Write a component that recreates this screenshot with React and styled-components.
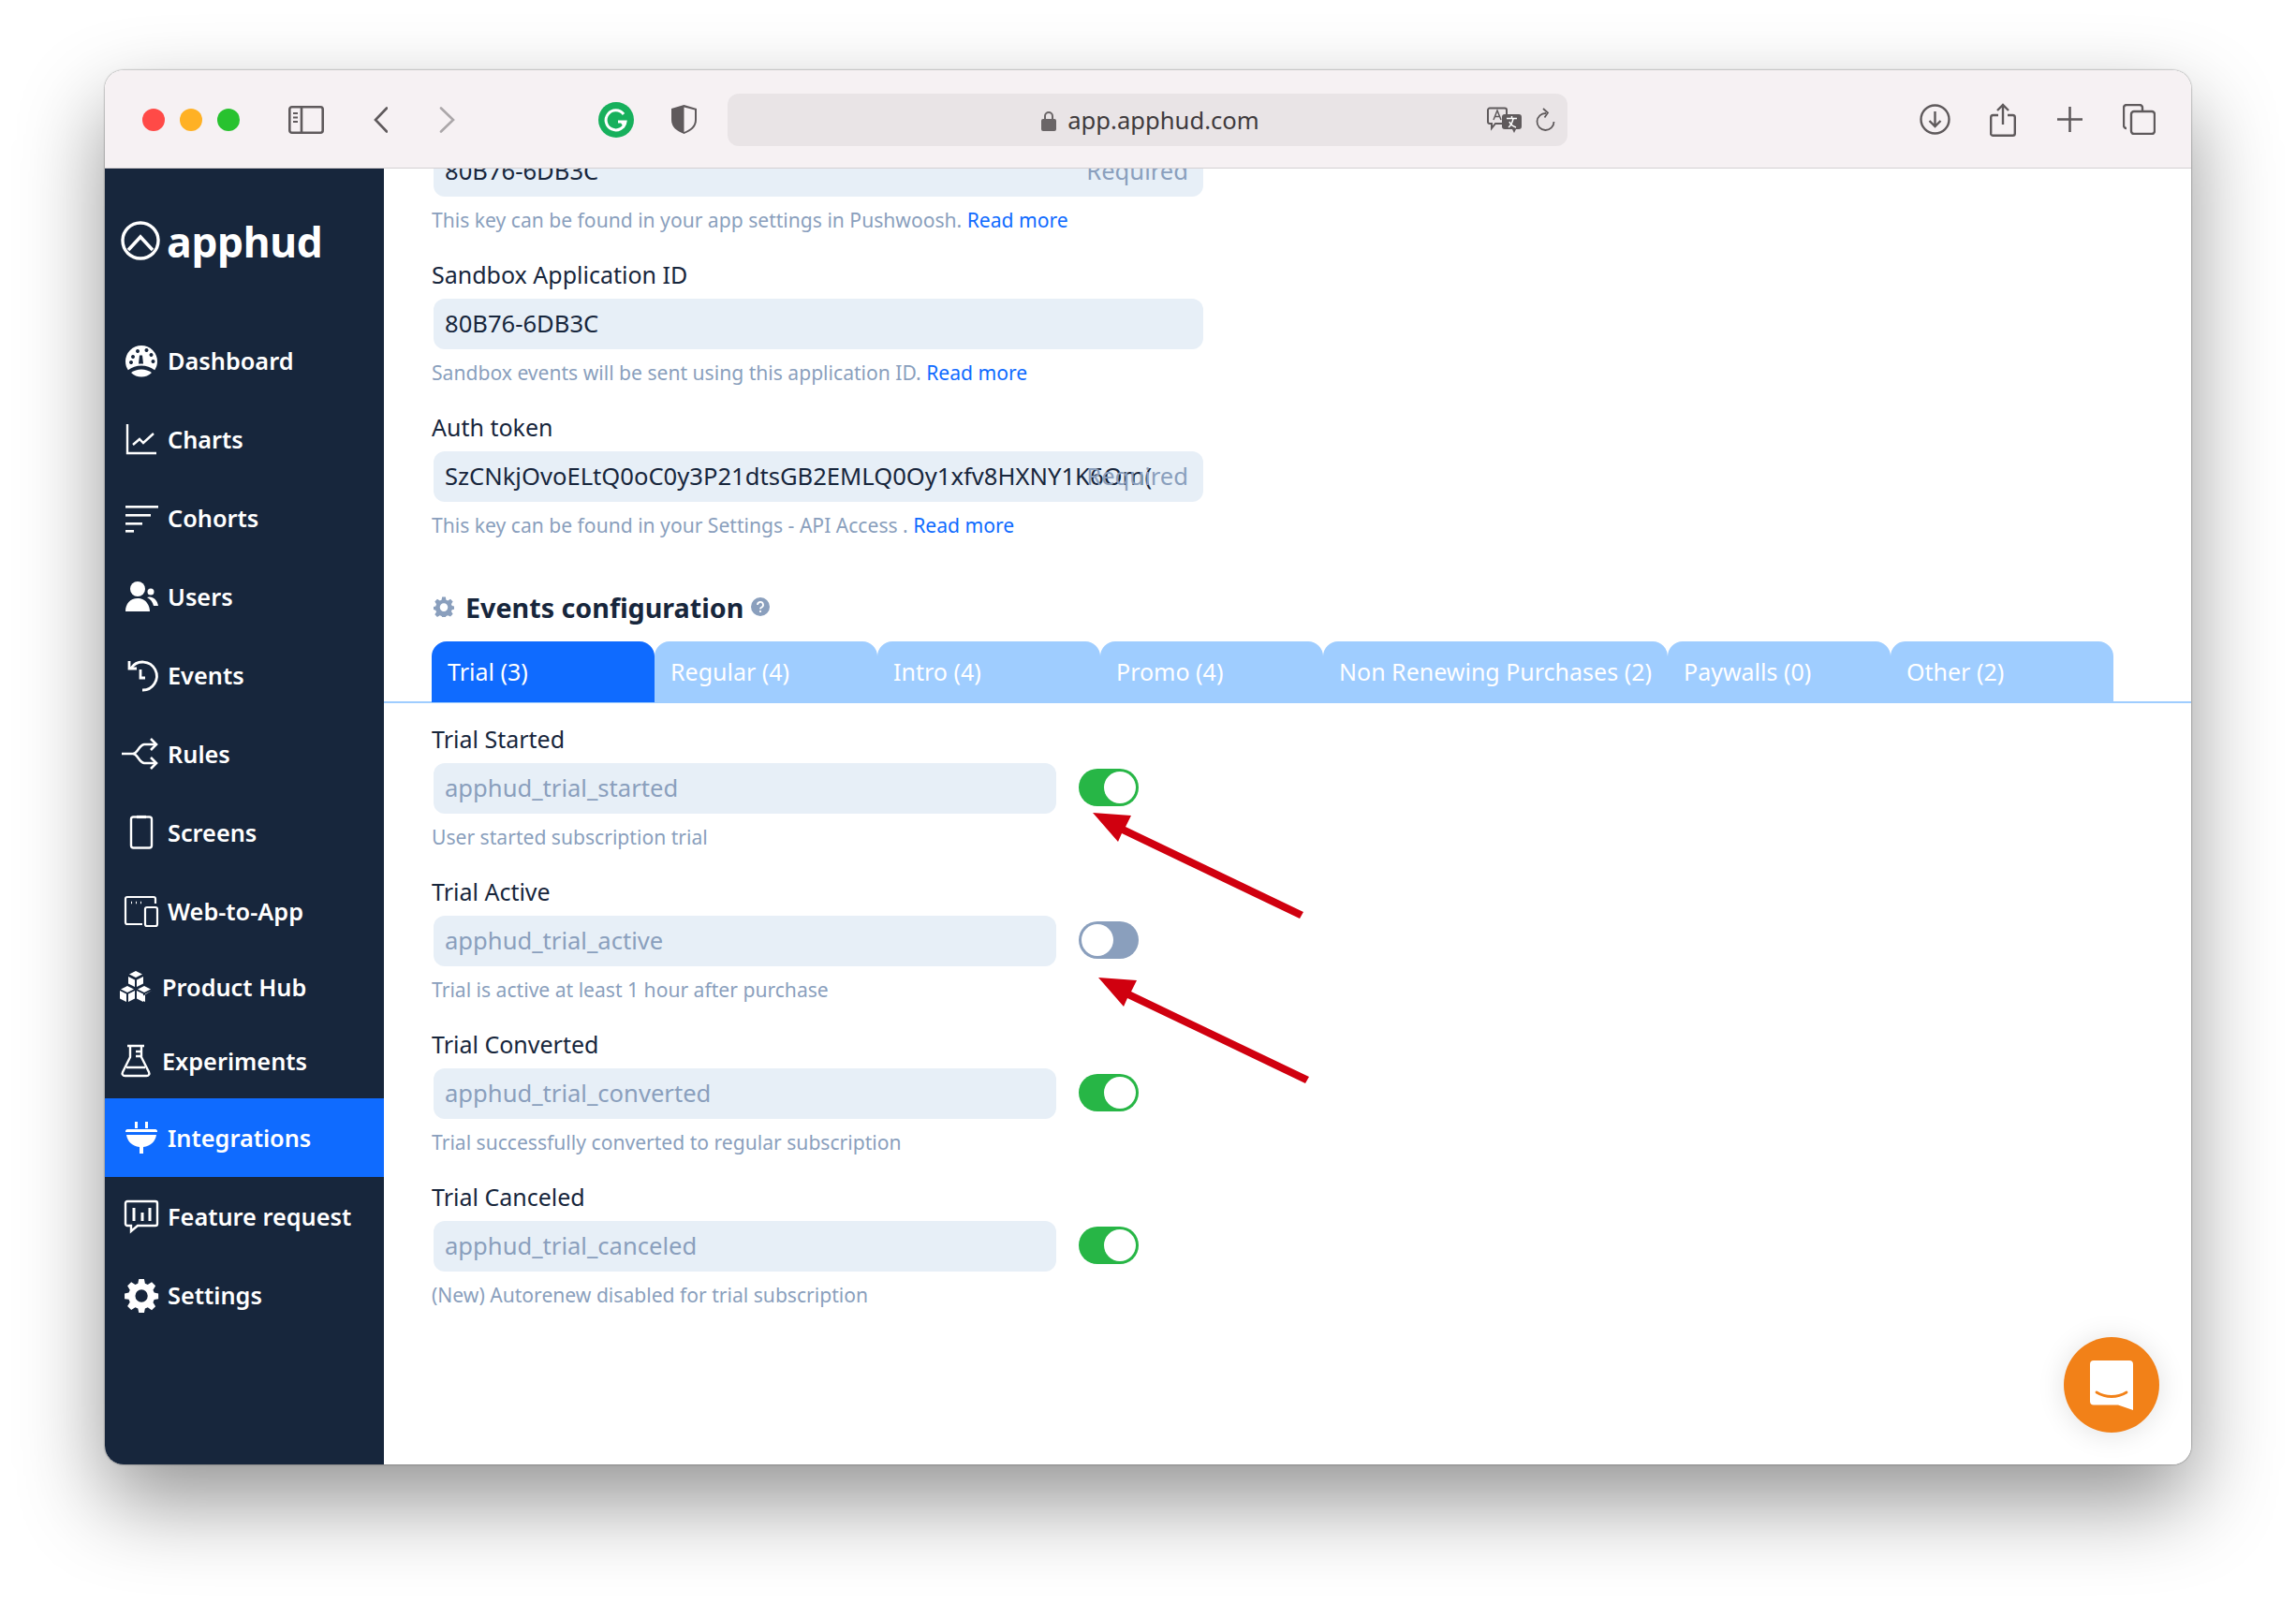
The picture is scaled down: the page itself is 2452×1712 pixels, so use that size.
import { createGlobalStyle, styled } from "styled-components"

const GlobalStyle = createGlobalStyle`
    html, body {
        margin: 0;
        padding: 0;
        background: #fff;
    }
    * {
        box-sizing: border-box;
    }
`

const TEXT_FONT = `"Noto Sans", "Open Sans", sans-serif`

const Page = styled.div`
    width: 2452px;
    height: 1712px;
    padding: 75px 112px 148px;
    font-family: ${TEXT_FONT};
    overflow: hidden;
`

const BrowserShadow = styled.div`
    height: 100%;
    border-radius: 20px;
    box-shadow: 0 40px 90px rgba(0, 0, 0, 0.42), 0 0 2px rgba(0, 0, 0, 0.6);
`

const Browser = styled.div`
    position: relative;
    height: 100%;
    display: flex;
    flex-direction: column;
    border-radius: 20px;
    overflow: hidden;
    background: #fff;
`

const Toolbar = styled.header`
    flex: 0 0 105px;
    display: flex;
    align-items: center;
    padding: 1px 38px 0 40px;
    background: #f6f1f3;
    border-bottom: 1px solid #d4d0d2;
    color: #5f5a5c;
    z-index: 2;
`

const Lights = styled.div`
    display: flex;
    gap: 16px;
    margin-right: 52px;
`

const Light = styled.span`
    width: 24px;
    height: 24px;
    border-radius: 50%;
    background: ${(p) => p.$color};
`

const ToolIcon = styled.svg`
    display: block;
    flex: none;
    margin-right: ${(p) => p.$gap || 0}px;
`

const AddressBar = styled.div`
    position: relative;
    width: 897px;
    height: 56px;
    display: flex;
    align-items: center;
    justify-content: center;
    gap: 12px;
    margin-right: auto;
    padding: 2px 0 0 6px;
    border-radius: 12px;
    background: #e9e4e6;
    color: #3f3b3d;
    font-size: 25.6px;
`

const AddressActions = styled.div`
    position: absolute;
    top: 0;
    right: 13px;
    height: 100%;
    display: flex;
    align-items: center;
    gap: 15px;
`

const Body = styled.div`
    flex: 1;
    min-height: 0;
    display: flex;
`

const Sidebar = styled.aside`
    flex: 0 0 298px;
    background: #17263c;
    color: #fff;
    overflow: hidden;
`

const Logo = styled.div`
    display: flex;
    align-items: center;
    gap: 7px;
    height: 100px;
    margin-top: 27px;
    padding-left: 17px;
    font-family: "Open Sans", sans-serif;
    font-size: 44.5px;
    font-weight: 700;
    letter-spacing: -0.6px;
`

const Nav = styled.nav`
    display: flex;
    flex-direction: column;
    margin-top: 35.5px;
`

const NavItem = styled.div`
    height: ${(p) => (p.$compact ? 79 : 84)}px;
    display: flex;
    align-items: center;
    padding-left: ${(p) => (p.$compact ? 15 : 21)}px;
    gap: 10px;
    background: ${(p) => (p.$active ? "#0f6bff" : "transparent")};
    font-size: 25.3px;
    font-weight: 600;
`

const NavIcon = styled.svg`
    flex: none;
    display: block;
`

const Main = styled.main`
    position: relative;
    flex: 1;
    min-width: 0;
    overflow: hidden;
    color: #17263c;
`

const Scroller = styled.div`
    margin-top: -56px;
`

const Section = styled.div`
    padding: 32px 0 0 51px;
`

const Label = styled.div`
    height: 55px;
    padding-top: 6px;
    line-height: 46px;
    font-size: 25px;
`

const InputRow = styled.div`
    display: flex;
    align-items: center;
    gap: 24px;
`

const InputBox = styled.div`
    position: relative;
    flex: none;
    width: ${(p) => p.$width}px;
    height: 54px;
    line-height: 54px;
    margin-left: 2px;
    padding: 0 12px;
    border-radius: 12px;
    background: #e7eff7;
    color: ${(p) => (p.$muted ? "#8a9fbd" : "#17263c")};
    font-size: 25.6px;
    white-space: nowrap;
    overflow: hidden;
`

const Required = styled.span`
    position: absolute;
    top: 0;
    right: 16px;
    color: #8a9fbd;
`

const Hint = styled.div`
    height: 54px;
    padding-top: 10px;
    line-height: 30px;
    color: #8a9fbd;
    font-size: 21.1px;
`

const Link = styled.a`
    color: #0f6bff;
`

const ConfigTitle = styled.h2`
    display: flex;
    align-items: center;
    height: 44px;
    margin: 36px 0 15px 2px;
    gap: 8px;
    font-size: 28.7px;
    font-weight: 700;
`

const GearIcon = styled.svg`
    margin-right: 4px;
`

const Tabs = styled.div`
    display: flex;
    padding-left: 51px;
    border-bottom: 2px solid #9fcdff;
`

const Tab = styled.div`
    width: ${(p) => p.$width}px;
    height: 65px;
    margin-bottom: -1px;
    padding: 17px 17px 0;
    border-radius: 16px 16px 0 0;
    background: ${(p) => (p.$active ? "#0f6bff" : "#9fcdff")};
    color: #fff;
    font-size: 25px;
    line-height: 30px;
    white-space: nowrap;
`

const Events = styled.div`
    margin-top: 9px;
    padding-left: 51px;
`

const Switch = styled.span`
    flex: none;
    display: flex;
    justify-content: ${(p) => (p.$on ? "flex-end" : "flex-start")};
    align-items: center;
    width: 64px;
    height: 40px;
    margin-top: -2px;
    padding: 0 3px;
    border-radius: 20px;
    background: ${(p) => (p.$on ? "#27b646" : "#8a9fbd")};
    &::after {
        content: "";
        width: 34px;
        height: 34px;
        border-radius: 50%;
        background: #fff;
    }
`

const Arrow = styled.svg`
    position: absolute;
    left: ${(p) => p.$x}px;
    top: ${(p) => p.$y}px;
    pointer-events: none;
`

const ChatButton = styled.div`
    position: absolute;
    right: 34px;
    bottom: 34px;
    width: 102px;
    height: 102px;
    display: flex;
    align-items: center;
    justify-content: center;
    border-radius: 50%;
    background: #f28118;
    box-shadow: 0 2px 30px rgba(0, 0, 0, 0.12);
`

const navItems = [
    { label: "Dashboard", icon: <g fill="currentColor"><path fillRule="evenodd" d="M18 2a17 17 0 0 0-17 17c0 3.500 1 6.500 2.800 9.200C8 25.200 12.600 23.500 18 23.500s10 1.700 14.200 4.700C34 25.500 35 22.500 35 19A17 17 0 0 0 18 2ZM12 8a2 2 0 1 1 0 .01ZM21.500 7a2 2 0 1 1 0 .01ZM7 14a2 2 0 1 1 0 .01ZM26.500 12a2 2 0 1 1 0 .01ZM16 12.500l3 0 1 9h-5ZM5 20a2 2 0 1 1 0 .01ZM28.500 19a2 2 0 1 1 0 .01Z"/><path d="M7 31c3-2 7-3.500 11-3.500S26 29 29 31c-3 3-7 4.500-11 4.500S10 34 7 31Z"/></g> },
    { label: "Charts", icon: <g fill="none" stroke="currentColor" strokeWidth="2.400"><path d="M3 2v31h31"/><path d="M9 24l7-6 4 4 11-10"/></g> },
    { label: "Cohorts", icon: <g fill="currentColor"><rect x="1" y="5" width="35" height="2.600"/><rect x="1" y="14" width="27" height="2.600"/><rect x="1" y="23" width="18" height="2.600"/><rect x="1" y="31" width="9" height="2.600"/></g> },
    { label: "Users", icon: <g fill="currentColor"><circle cx="14" cy="10" r="8"/><path d="M1 34c0-8 5-14 13-14 4 0 8 1.500 10 5 2 2.500 3 6 3 9Z"/><circle cx="28" cy="13" r="3.500"/><path d="M24 19c5-2 11 2 12 9h-5c-1-4-3-7-7-9Z"/></g> },
    { label: "Events", icon: <g fill="none" stroke="currentColor" strokeWidth="2.800"><path d="M7 10.500A15 15 0 1 1 19 34"/><path d="M5 3v8h8"/><path d="M17 12v9h5"/></g> },
    { label: "Rules", icon: <g fill="none" stroke="currentColor" strokeWidth="2.600"><path d="M-3 18h12c5 0 6-9 12-10h12"/><path d="M9 18c5 0 6 9 12 10h12"/><path d="M28 2l6 6-6 6M28 22l6 6-6 6"/></g> },
    { label: "Screens", icon: <g fill="none" stroke="currentColor" strokeWidth="2.400"><rect x="7" y="1.500" width="22" height="33" rx="2.500"/><path d="M13 1.500h10" strokeWidth="3.200"/></g> },
    { label: "Web-to-App", icon: <g fill="none" stroke="currentColor" strokeWidth="2.200"><path d="M19 32H3a2 2 0 0 1-2-2V5a2 2 0 0 1 2-2h28a2 2 0 0 1 2 2v5"/><rect x="22" y="14" width="13" height="20" rx="2"/><path d="M7 9h1M12 9h1M17 9h1" strokeWidth="2.400"/></g> },
    { label: "Product Hub", compact: true, icon: <g fill="currentColor"><path d="M18 1l7 3.500-7 3.500-7-3.500Z"/><path d="M10 7l7 3.500v7.500l-7-3.500ZM26 7l-7 3.500v7.500l7-3.500Z"/><path d="M9 17l7 3.500-7 3.500-7-3.500ZM27 17l7 3.500-7 3.500-7-3.500Z"/><path d="M1 22l7 3.500V34l-7-3.500ZM17 22l-7 3.500V34l7-3.500ZM19 22l7 3.500V34l-7-3.500ZM35 22l-7 3.500V34l-7-3.500Z"/></g> },
    { label: "Experiments", compact: true, icon: <g fill="none" stroke="currentColor" strokeWidth="2.400"><path d="M9 2h18M12 2v12L4 30c-1 2 0 4 2.500 4h23c2.500 0 3.500-2 2.500-4L24 14V2"/><path d="M8 25h20M18 8h6M18 13h6"/></g> },
    { label: "Integrations", active: true, icon: <g fill="currentColor"><path d="M11 1h3v7h-3ZM22 1h3v7h-3Z"/><path d="M3 9h30c1 0 2 1 2 2v1H1v-1c0-1 1-2 2-2Z"/><path d="M2 15h32c-1 7-6 12-14 13v7h-4v-7C8 27 3 22 2 15Z"/></g> },
    { label: "Feature request", icon: <g fill="none" stroke="currentColor" strokeWidth="2.400"><path d="M3 2h30a2 2 0 0 1 2 2v22a2 2 0 0 1-2 2H14l-7 6v-6H3a2 2 0 0 1-2-2V4a2 2 0 0 1 2-2Z"/><path d="M10 9v14M19 14v9M27 9v14" strokeWidth="3"/></g> },
    { label: "Settings", icon: <path fill="currentColor" fillRule="evenodd" d="M15 1h6l1 5 3 1.300 4.500-2.800 4.300 4.300L31 13.300l1.300 3 4.700 1v6l-4.700 1-1.300 3 2.800 4.500-4.300 4.300L25 33l-3 1.300-1 4.700h-6l-1-4.700L11 33l-4.500 2.800-4.300-4.300L5 27l-1.300-3L-1 23.300v-6l4.700-1L5 13.300 2.200 8.800l4.300-4.300L11 7.300l3-1.300ZM18 13a7 7 0 1 0 0 14 7 7 0 0 0 0-14Z" transform="translate(1 0) scale(.95)"/> },
]

const topFields = [
    { label: "Sandbox Application ID", value: "80B76-6DB3C", hint: "Sandbox events will be sent using this application ID." },
    { label: "Auth token", value: "SzCNkjOvoELtQ0oC0y3P21dtsGB2EMLQ0Oy1xfv8HXNY1K6Om(", hint: "This key can be found in your Settings - API Access .", required: true },
]

const tabs = [
    { label: "Trial (3)", width: 238, active: true },
    { label: "Regular (4)", width: 238 },
    { label: "Intro (4)", width: 238 },
    { label: "Promo (4)", width: 238 },
    { label: "Non Renewing Purchases (2)", width: 368 },
    { label: "Paywalls (0)", width: 238 },
    { label: "Other (2)", width: 238 },
]

const events = [
    { label: "Trial Started", value: "apphud_trial_started", hint: "User started subscription trial", on: true },
    { label: "Trial Active", value: "apphud_trial_active", hint: "Trial is active at least 1 hour after purchase", on: false },
    { label: "Trial Converted", value: "apphud_trial_converted", hint: "Trial successfully converted to regular subscription", on: true },
    { label: "Trial Canceled", value: "apphud_trial_canceled", hint: "(New) Autorenew disabled for trial subscription", on: true },
]

const RedArrow = ({ x, y }) => (
    <Arrow $x={x} $y={y} width="240" height="125" viewBox="0 0 240 125">
        <path fill="#d0000f" d="M5 5L46 8 40 20 230 111 226 118 36 27 32 36Z" />
    </Arrow>
)

const App = () => {
    return (
        <Page>
            <GlobalStyle />
            <BrowserShadow>
                <Browser>
                    <Toolbar>
                        <Lights>
                            <Light $color="#ff4a47" />
                            <Light $color="#ffb124" />
                            <Light $color="#28c22f" />
                        </Lights>
                        <ToolIcon $gap={53} width="38" height="30" viewBox="0 0 38 30" fill="none" stroke="currentColor" strokeWidth="2.600">
                            <rect x="1.300" y="1.300" width="35.400" height="27.400" rx="2.500" />
                            <path d="M14 1v28" />
                            <path d="M5 8h5M5 12.500h5M5 17h5" strokeWidth="2" />
                        </ToolIcon>
                        <ToolIcon $gap={55} width="15" height="28" viewBox="0 0 15 28" fill="none" stroke="currentColor" strokeWidth="2.600" strokeLinecap="round">
                            <path d="M14 1.500L2 14l12 12.500" />
                        </ToolIcon>
                        <ToolIcon $gap={153} width="17" height="28" viewBox="0 0 17 28" fill="none" stroke="#aba7a9" strokeWidth="2.600" strokeLinecap="round">
                            <path d="M2 1.500L15 14 2 26.500" />
                        </ToolIcon>
                        <ToolIcon $gap={39} width="38" height="38" viewBox="0 0 38 38">
                            <circle cx="19" cy="19" r="19" fill="#17b05c" />
                            <path d="M27 13a10.500 10.500 0 1 0 2 8h-8" fill="none" stroke="#fff" strokeWidth="3" />
                            <path d="M24 22l3.500 6 2.500-6" fill="#fff" />
                        </ToolIcon>
                        <ToolIcon $gap={32} width="29" height="33" viewBox="0 0 29 33">
                            <path d="M14.500 1L28 5v12c0 8-6 12-13.500 15C7 29 1 25 1 17V5Z" fill="#5f5a5c" />
                            <path d="M14.500 3.500L26 6.500V17c0 6.500-5 10.500-11.500 13Z" fill="#f6f1f3" />
                        </ToolIcon>
                        <AddressBar>
                            <svg width="16" height="22" viewBox="0 0 16 22" fill="#6a6567">
                                <path d="M3 9V6a5 5 0 0 1 10 0v3h-2V6a3 3 0 0 0-6 0v3Z" />
                                <rect x="0" y="9" width="16" height="13" rx="2" />
                            </svg>
                            app.apphud.com
                            <AddressActions>
                                <svg width="37" height="28" viewBox="0 0 37 28">
                                    <path d="M3 1.500h16a2 2 0 0 1 2 2V16a2 2 0 0 1-2 2H9l-4 5v-5H3a2 2 0 0 1-2-2V3.500a2 2 0 0 1 2-2Z" fill="#e9e4e6" stroke="#5f5a5c" strokeWidth="2" />
                                    <path d="M7 14l4-10 4 10M8.500 10.500h5" fill="none" stroke="#5f5a5c" strokeWidth="1.500" />
                                    <path d="M19 8h15a3 3 0 0 1 3 3v10a3 3 0 0 1-3 3h-3l-2 4-2-4h-8a3 3 0 0 1-3-3V11a3 3 0 0 1 3-3Z" fill="#5f5a5c" />
                                    <path d="M21 12.500h11M26.500 10v2.500M23 22c3-2 4-5 5-9M24 16c1 3 4 5 7 6" fill="none" stroke="#fff" strokeWidth="1.500" />
                                </svg>
                                <svg width="21" height="26" viewBox="0 0 21 26" fill="none" stroke="#5f5a5c" strokeWidth="1.800">
                                    <path d="M11 6A9 9 0 1 0 19.500 15" />
                                    <path d="M8 1l5 4.500-3.500 5" />
                                </svg>
                            </AddressActions>
                        </AddressBar>
                        <ToolIcon $gap={42} width="33" height="33" viewBox="0 0 33 33" fill="none" stroke="currentColor" strokeWidth="2.400">
                            <circle cx="16.500" cy="16.500" r="15" />
                            <path d="M16.500 8v16M10.500 18l6 6 6-6" />
                        </ToolIcon>
                        <ToolIcon $gap={44} width="28" height="36" viewBox="0 0 28 36" fill="none" stroke="currentColor" strokeWidth="2.400">
                            <path d="M9 13H3.500a2.300 2.300 0 0 0-2.300 2.300v16.400A2.300 2.300 0 0 0 3.500 34.800h21a2.300 2.300 0 0 0 2.300-2.300V15.300A2.300 2.300 0 0 0 24.500 13H19" />
                            <path d="M14 23V2M8 8l6-6 6 6" />
                        </ToolIcon>
                        <ToolIcon $gap={43} width="27" height="27" viewBox="0 0 27 27" stroke="currentColor" strokeWidth="2.600">
                            <path d="M13.500 0v27M0 13.500h27" />
                        </ToolIcon>
                        <ToolIcon width="35" height="33" viewBox="0 0 35 33" fill="none" stroke="currentColor" strokeWidth="2.400">
                            <path d="M4 26a3 3 0 0 1-3-3V4a3 3 0 0 1 3-3h14a3 3 0 0 1 3 3v3" />
                            <rect x="9" y="8" width="25" height="24" rx="3" fill="#f6f1f3" />
                        </ToolIcon>
                    </Toolbar>
                    <Body>
                        <Sidebar>
                            <Logo>
                                <svg width="42" height="42" viewBox="0 0 42 42" fill="none" stroke="#fff">
                                    <circle cx="21" cy="21" r="19" strokeWidth="3.400" />
                                    <path d="M8 31L21 17l13 14" strokeWidth="3.600" />
                                </svg>
                                apphud
                            </Logo>
                            <Nav>
                                {navItems.map((item) => (
                                    <NavItem key={item.label} $compact={item.compact} $active={item.active}>
                                        <NavIcon width="36" height="36" viewBox="0 0 36 36" overflow="visible">{item.icon}</NavIcon>
                                        {item.label}
                                    </NavItem>
                                ))}
                            </Nav>
                        </Sidebar>
                        <Main>
                            <Scroller>
                                <Section>
                                    <InputBox $width={822}>
                                        80B76-6DB3C
                                        <Required>Required</Required>
                                    </InputBox>
                                    <Hint>This key can be found in your app settings in Pushwoosh. <Link>Read more</Link></Hint>
                                    {topFields.map((field) => (
                                        <div key={field.label}>
                                            <Label>{field.label}</Label>
                                            <InputBox $width={822}>
                                                {field.value}
                                                {field.required && <Required>Required</Required>}
                                            </InputBox>
                                            <Hint>{field.hint} <Link>Read more</Link></Hint>
                                        </div>
                                    ))}
                                    <ConfigTitle>
                                        <GearIcon width="22" height="22" viewBox="0 0 36 36">
                                            <path fill="#8a9fbd" fillRule="evenodd" d="M15 1h6l1 5 3 1.300 4.500-2.800 4.300 4.300L31 13.300l1.300 3 3.700 1v5l-3.700 1-1.300 3 2.800 4.500-4.300 4.300L25 33l-3 1.300-1 1.700h-6l-1-1.700L11 33l-4.500 2.800-4.300-4.300L5 27l-1.300-3L0 23v-5l3.700-1L5 13.300 2.200 8.800l4.300-4.300L11 7.300l3-1.300ZM18 12a7 7 0 1 0 0 14 7 7 0 0 0 0-14Z" />
                                        </GearIcon>
                                        Events configuration
                                        <svg width="20" height="20" viewBox="0 0 20 20">
                                            <circle cx="10" cy="10" r="10" fill="#8a9fbd" />
                                            <path d="M7 8a3 3 0 1 1 4 2.800c-.8.4-1 .8-1 1.700M10 14v2" fill="none" stroke="#fff" strokeWidth="1.800" />
                                        </svg>
                                    </ConfigTitle>
                                </Section>
                                <Tabs>
                                    {tabs.map((tab) => (
                                        <Tab key={tab.label} $width={tab.width} $active={tab.active}>{tab.label}</Tab>
                                    ))}
                                </Tabs>
                                <Events>
                                    {events.map((event) => (
                                        <div key={event.label}>
                                            <Label>{event.label}</Label>
                                            <InputRow>
                                                <InputBox $width={665} $muted>{event.value}</InputBox>
                                                <Switch $on={event.on} />
                                            </InputRow>
                                            <Hint>{event.hint}</Hint>
                                        </div>
                                    ))}
                                </Events>
                            </Scroller>
                            <RedArrow x={752} y={683} />
                            <RedArrow x={758} y={859} />
                            <ChatButton>
                                <svg width="46" height="53" viewBox="0 0 46 53">
                                    <path fill="#fff" d="M4 0h38a4 4 0 0 1 4 4v49l-16-5.500H4a4 4 0 0 1-4-4V4a4 4 0 0 1 4-4Z" />
                                    <path fill="none" stroke="#f28118" strokeWidth="2.800" strokeLinecap="round" d="M7 34c10 6 22 6 32 0" />
                                </svg>
                            </ChatButton>
                        </Main>
                    </Body>
                </Browser>
            </BrowserShadow>
        </Page>
    )
}

export default App
